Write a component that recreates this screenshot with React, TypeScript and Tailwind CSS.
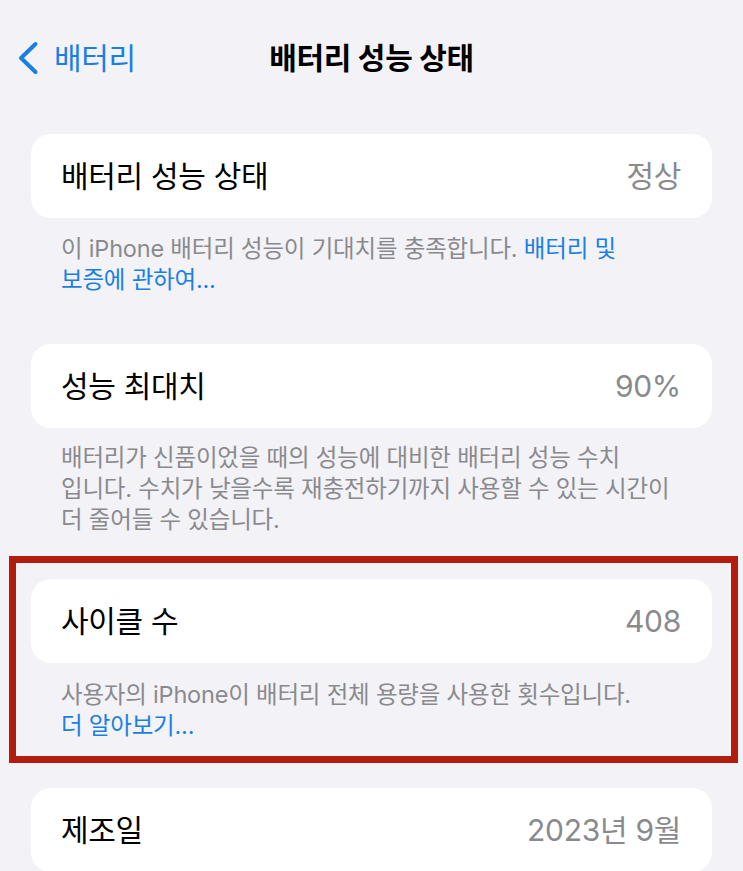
import React from "react";

const FONT = { fontFamily: 'Inter, "Noto Sans CJK KR", "Noto Sans", sans-serif' };

function Card({ title, value }: { title: string; value: string }) {
  return (
    <div className="h-[84px] rounded-[20px] bg-white flex items-center justify-between pl-[30px] pr-[31px]">
      <span className="text-[30px] leading-none text-black tracking-[-0.3px]">{title}</span>
      <span className="text-[30px] leading-none text-[#8a8a8e] tracking-[-0.3px]">{value}</span>
    </div>
  );
}

function Footer({ lines, pt }: { lines: React.ReactNode[]; pt: string }) {
  return (
    <div className={`pl-[30px] ${pt} text-[23.5px] leading-[31px] text-[#8a8a8e] tracking-[-0.2px]`}>
      {lines.map((l, i) => (
        <div key={i} className="whitespace-nowrap">
          {l}
        </div>
      ))}
    </div>
  );
}

export default function App() {
  return (
    <div className="w-full min-h-[871px] h-[871px] overflow-hidden bg-[#f2f2f7]" style={FONT}>
      {/* Header */}
      <div className="h-[116px] grid grid-cols-[1fr_auto_1fr] items-center">
        <div className="flex items-center pl-[17px] gap-[15px] text-[#1a7fe3]">
          <svg width="22" height="34" viewBox="0 0 22 34" fill="none">
            <path d="M18.5 3 L4 17 L18.5 31" stroke="#1a7fe3" strokeWidth="4" strokeLinecap="round" strokeLinejoin="round" />
          </svg>
          <span className="text-[30px] leading-none tracking-[-0.3px]">배터리</span>
        </div>
        <div className="text-[30px] leading-none font-bold text-black tracking-[-0.3px]">배터리 성능 상태</div>
        <div />
      </div>

      <div className="pt-[18px] px-[31px]">
        <Card title="배터리 성능 상태" value="정상" />
        <Footer
          pt="pt-[15px]"
          lines={[
            <>
              이 iPhone 배터리 성능이 기대치를 충족합니다. <span className="text-[#1a7fe3]">배터리 및</span>
            </>,
            <span className="text-[#1a7fe3]">보증에 관하여...</span>,
          ]}
        />

        <div className="mt-[49px]">
          <Card title="성능 최대치" value="90%" />
          <Footer
            pt="pt-[14px]"
            lines={[
              "배터리가 신품이었을 때의 성능에 대비한 배터리 성능 수치",
              "입니다. 수치가 낮을수록 재충전하기까지 사용할 수 있는 시간이",
              "더 줄어들 수 있습니다.",
            ]}
          />
        </div>
      </div>

      <div className="mt-[21px] ml-[9px] mr-[5px] border-[7px] border-[#b31d0e] pt-[16px] pb-[15px] pl-[15px] pr-[19px]">
        <Card title="사이클 수" value="408" />
        <Footer
          pt="pt-[16px]"
          lines={[
            "사용자의 iPhone이 배터리 전체 용량을 사용한 횟수입니다.",
            <span className="text-[#1a7fe3]">더 알아보기...</span>,
          ]}
        />
      </div>

      <div className="mt-[25px] px-[31px]">
        <Card title="제조일" value="2023년 9월" />
      </div>
    </div>
  );
}
